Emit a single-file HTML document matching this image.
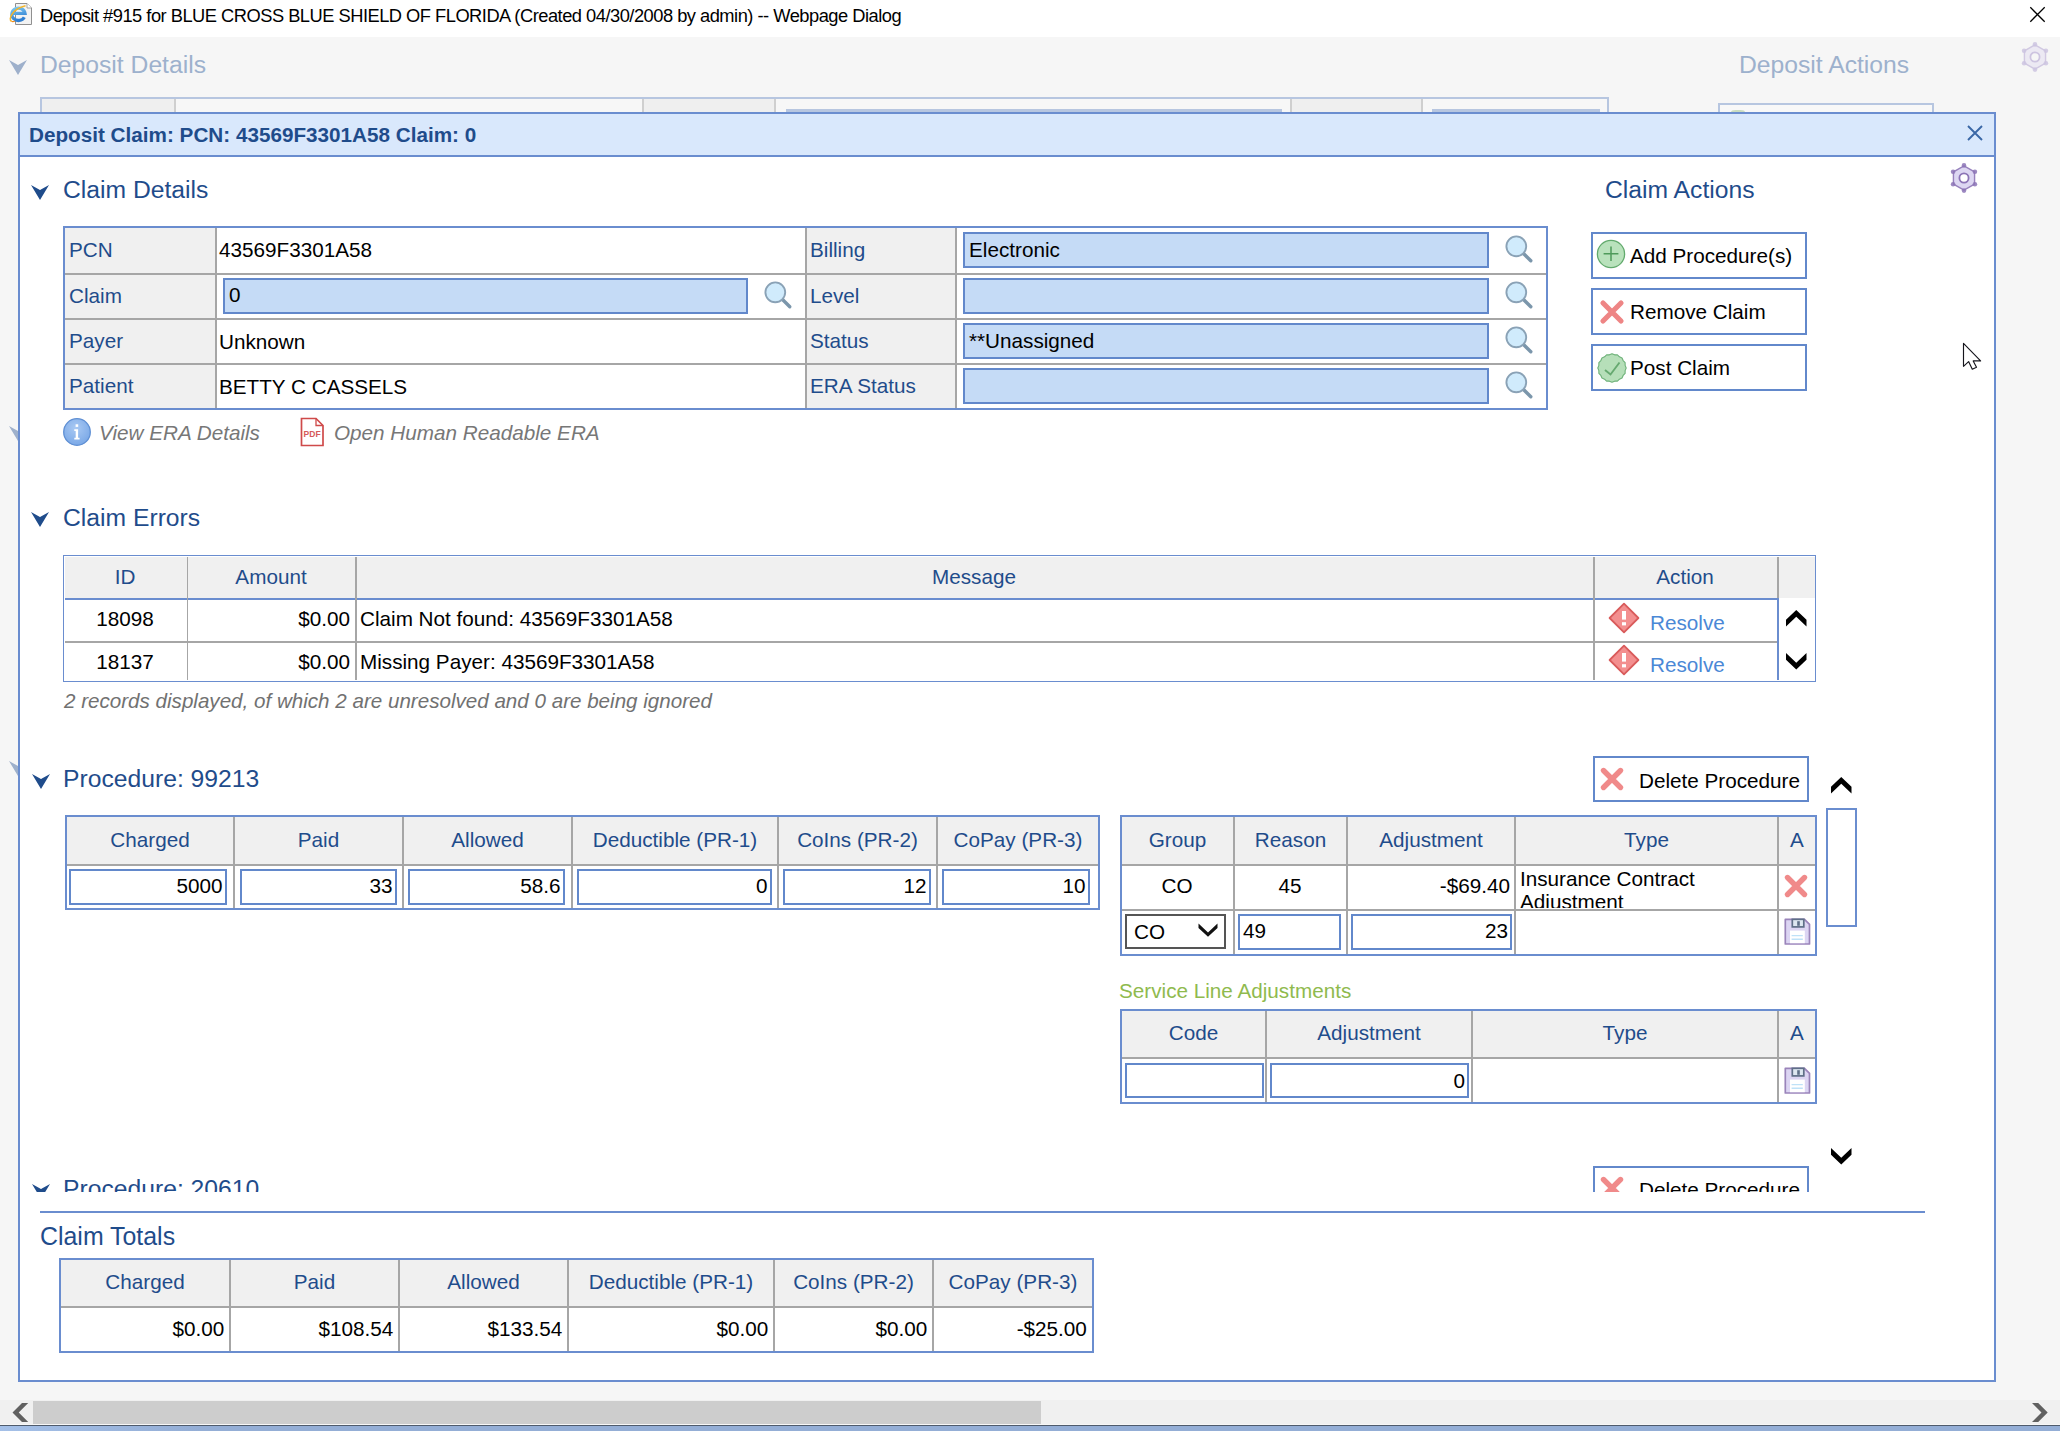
<!DOCTYPE html>
<html><head><meta charset="utf-8"><style>
html,body{margin:0;padding:0;width:2060px;height:1431px;overflow:hidden;background:#f6f6f6;}
body{position:relative;font-family:"Liberation Sans",sans-serif;}
body div{position:absolute;}
.t{white-space:pre;line-height:0;}
svg{position:absolute;overflow:visible;}
</style></head><body>
<div style="left:0px;top:0px;width:2060px;height:37px;background:#ffffff"></div>
<div class="t" style="left:40px;top:15.66px;font-size:18.3px;color:#000;letter-spacing:-0.5px">Deposit #915 for BLUE CROSS BLUE SHIELD OF FLORIDA (Created 04/30/2008 by admin) -- Webpage Dialog</div>
<svg style="left:0px;top:0px" width="40" height="30" viewBox="0 0 40 30">
<defs><linearGradient id="eg" x1="0" y1="0" x2="0.3" y2="1"><stop offset="0" stop-color="#7cc8f2"/><stop offset="1" stop-color="#2f7fd2"/></linearGradient></defs>
<path d="M15.5 3.5 H27 L31.5 8 V24.5 H15.5 Z" fill="#f3f3f3" stroke="#909090" stroke-width="1"/>
<path d="M27 3.5 V8 H31.5" fill="#fff" stroke="#909090" stroke-width="0.8"/>
<path d="M24.3 17.2 A6.6 6.2 0 1 1 25 13.4 H12.6" fill="none" stroke="url(#eg)" stroke-width="3.3"/>
<path d="M11.5 21.3 C8 19.5 12 9 25.5 5.8" fill="none" stroke="#f6b526" stroke-width="1.5"/>
<path d="M11.5 21.3 Q13 22 15 21" fill="none" stroke="#f08a1c" stroke-width="1.2"/>
</svg>
<svg style="left:2029px;top:6px" width="17" height="17" viewBox="0 0 17 17"><path d="M1.3 1.3 L15.7 15.7 M15.7 1.3 L1.3 15.7" stroke="#000" stroke-width="1.25"/></svg>
<div class="t" style="left:40px;top:65.44px;font-size:24.7px;color:#9db1cd;">Deposit Details</div>
<svg style="left:9px;top:60px" width="18" height="16" viewBox="0 0 18 16"><path d="M0 0 L9 5 L18 0 L9 15 Z" fill="#9eb0cb"/></svg>
<svg style="left:9px;top:426px" width="18" height="16" viewBox="0 0 18 16"><path d="M0 0 L9 5 L18 0 L9 15 Z" fill="#9eb0cb"/></svg>
<svg style="left:9px;top:761px" width="18" height="16" viewBox="0 0 18 16"><path d="M0 0 L9 5 L18 0 L9 15 Z" fill="#9eb0cb"/></svg>
<div class="t" style="left:1739px;top:65.44px;font-size:24.7px;color:#9db1cd;">Deposit Actions</div>
<div style="left:40px;top:97px;width:1569px;height:20px;box-sizing:border-box;border:2px solid #b7c6e0;background:#f7f7f7"></div>
<div style="left:42px;top:99px;width:132px;height:18px;background:#efefef"></div>
<div style="left:174px;top:99px;width:2px;height:18px;background:#cfcfcf"></div>
<div style="left:643px;top:99px;width:131px;height:18px;background:#efefef"></div>
<div style="left:642px;top:99px;width:2px;height:18px;background:#cfcfcf"></div>
<div style="left:774px;top:99px;width:2px;height:18px;background:#cfcfcf"></div>
<div style="left:1291px;top:99px;width:130px;height:18px;background:#efefef"></div>
<div style="left:1290px;top:99px;width:2px;height:18px;background:#cfcfcf"></div>
<div style="left:1421px;top:99px;width:2px;height:18px;background:#cfcfcf"></div>
<div style="left:786px;top:109px;width:496px;height:3px;background:#b7c6e0"></div>
<div style="left:1432px;top:109px;width:168px;height:3px;background:#b7c6e0"></div>
<div style="left:1718px;top:103px;width:216px;height:20px;box-sizing:border-box;border:2px solid #b7c6e0;background:#f8f8f8"></div>
<div style="left:1731px;top:110px;width:14px;height:4px;border-radius:7px/3px;background:#c9dcc0"></div>
<div style="left:18px;top:112px;width:1978px;height:1270px;box-sizing:border-box;border:2px solid #6a8dcf;background:#ffffff;"></div>
<div style="left:20px;top:114px;width:1974px;height:41px;background:#d9e8fc"></div>
<div style="left:20px;top:155px;width:1974px;height:2px;background:#6a8dcf"></div>
<div class="t" style="left:29px;top:134.83px;font-size:20.7px;color:#1f4c8b;font-weight:bold">Deposit Claim: PCN: 43569F3301A58 Claim: 0</div>
<svg style="left:1967px;top:125px" width="16" height="16" viewBox="0 0 16 16"><path d="M1 1 L15 15 M15 1 L1 15" stroke="#3a67a6" stroke-width="1.9"/></svg>
<svg style="left:2020px;top:42px;opacity:1" width="30" height="30" viewBox="0 0 30 30"><polygon points="15.00,2.80 25.57,8.90 25.57,21.10 15.00,27.20 4.43,21.10 4.43,8.90" fill="#ebe8f3" stroke="#cdc4e0" stroke-width="1.4" stroke-linejoin="round" opacity="0.9"/><circle cx="15.00" cy="2.40" r="2.3" fill="#cdc4e0" opacity="0.85"/><circle cx="25.91" cy="8.70" r="2.3" fill="#cdc4e0" opacity="0.85"/><circle cx="25.91" cy="21.30" r="2.3" fill="#cdc4e0" opacity="0.85"/><circle cx="15.00" cy="27.60" r="2.3" fill="#cdc4e0" opacity="0.85"/><circle cx="4.09" cy="21.30" r="2.3" fill="#cdc4e0" opacity="0.85"/><circle cx="4.09" cy="8.70" r="2.3" fill="#cdc4e0" opacity="0.85"/><circle cx="15" cy="15" r="4.6" fill="#f6f6f6" stroke="#cdc4e0" stroke-width="1.8"/></svg>
<svg style="left:31px;top:185px" width="18" height="16" viewBox="0 0 18 16"><path d="M0 0 L9 5 L18 0 L9 15 Z" fill="#1f4c8b"/></svg>
<div class="t" style="left:63px;top:190.44px;font-size:24.7px;color:#1f4c8b;">Claim Details</div>
<svg style="left:1949px;top:163px;opacity:1" width="30" height="30" viewBox="0 0 30 30"><polygon points="15.00,2.80 25.57,8.90 25.57,21.10 15.00,27.20 4.43,21.10 4.43,8.90" fill="#dad3f1" stroke="#8c74b6" stroke-width="1.4" stroke-linejoin="round" opacity="0.9"/><circle cx="15.00" cy="2.40" r="2.3" fill="#8c74b6" opacity="0.85"/><circle cx="25.91" cy="8.70" r="2.3" fill="#8c74b6" opacity="0.85"/><circle cx="25.91" cy="21.30" r="2.3" fill="#8c74b6" opacity="0.85"/><circle cx="15.00" cy="27.60" r="2.3" fill="#8c74b6" opacity="0.85"/><circle cx="4.09" cy="21.30" r="2.3" fill="#8c74b6" opacity="0.85"/><circle cx="4.09" cy="8.70" r="2.3" fill="#8c74b6" opacity="0.85"/><circle cx="15" cy="15" r="4.6" fill="#ffffff" stroke="#8c74b6" stroke-width="1.8"/></svg>
<div class="t" style="left:1605px;top:190.44px;font-size:24.7px;color:#1f4c8b;">Claim Actions</div>
<div style="left:63px;top:226px;width:1485px;height:184px;box-sizing:border-box;border:2px solid #6a8dcf;background:#fff;"></div>
<div style="left:65px;top:228px;width:150px;height:180px;background:#f0f0f0"></div>
<div style="left:807px;top:228px;width:148px;height:180px;background:#f0f0f0"></div>
<div style="left:215px;top:228px;width:2px;height:180px;background:#a6a6a6"></div>
<div style="left:805px;top:228px;width:2px;height:180px;background:#a6a6a6"></div>
<div style="left:955px;top:228px;width:2px;height:180px;background:#a6a6a6"></div>
<div style="left:65px;top:273px;width:1481px;height:2px;background:#a6a6a6"></div>
<div style="left:65px;top:318px;width:1481px;height:2px;background:#a6a6a6"></div>
<div style="left:65px;top:363px;width:1481px;height:2px;background:#a6a6a6"></div>
<div class="t" style="left:69px;top:249.83px;font-size:20.7px;color:#1f4c8b;">PCN</div>
<div class="t" style="left:69px;top:295.83px;font-size:20.7px;color:#1f4c8b;">Claim</div>
<div class="t" style="left:69px;top:340.83px;font-size:20.7px;color:#1f4c8b;">Payer</div>
<div class="t" style="left:69px;top:385.83px;font-size:20.7px;color:#1f4c8b;">Patient</div>
<div class="t" style="left:810px;top:249.83px;font-size:20.7px;color:#1f4c8b;">Billing</div>
<div class="t" style="left:810px;top:295.83px;font-size:20.7px;color:#1f4c8b;">Level</div>
<div class="t" style="left:810px;top:340.83px;font-size:20.7px;color:#1f4c8b;">Status</div>
<div class="t" style="left:810px;top:385.83px;font-size:20.7px;color:#1f4c8b;">ERA Status</div>
<div class="t" style="left:219px;top:249.83px;font-size:20.7px;color:#000;">43569F3301A58</div>
<div class="t" style="left:219px;top:341.83px;font-size:20.7px;color:#000;">Unknown</div>
<div class="t" style="left:219px;top:386.83px;font-size:20.7px;color:#000;">BETTY C CASSELS</div>
<div style="left:223px;top:278px;width:525px;height:36px;box-sizing:border-box;border:2px solid #6288cb;background:#c5dbf6;"></div>
<div class="t" style="left:229px;top:294.83px;font-size:20.7px;color:#000;">0</div>
<svg style="left:763px;top:281px" width="30" height="30" viewBox="0 0 30 30"><line x1="19" y1="18" x2="26.8" y2="25.8" stroke="#7b96ab" stroke-width="3.4" stroke-linecap="round"/><circle cx="12.3" cy="11.3" r="9.9" fill="#d0ebfc" stroke="#8aa2b6" stroke-width="1.9"/></svg>
<div style="left:963px;top:232px;width:526px;height:36px;box-sizing:border-box;border:2px solid #6288cb;background:#c5dbf6;"></div>
<div class="t" style="left:969px;top:249.83px;font-size:20.7px;color:#000;">Electronic</div>
<svg style="left:1504px;top:235px" width="30" height="30" viewBox="0 0 30 30"><line x1="19" y1="18" x2="26.8" y2="25.8" stroke="#7b96ab" stroke-width="3.4" stroke-linecap="round"/><circle cx="12.3" cy="11.3" r="9.9" fill="#d0ebfc" stroke="#8aa2b6" stroke-width="1.9"/></svg>
<div style="left:963px;top:278px;width:526px;height:36px;box-sizing:border-box;border:2px solid #6288cb;background:#c5dbf6;"></div>
<svg style="left:1504px;top:281px" width="30" height="30" viewBox="0 0 30 30"><line x1="19" y1="18" x2="26.8" y2="25.8" stroke="#7b96ab" stroke-width="3.4" stroke-linecap="round"/><circle cx="12.3" cy="11.3" r="9.9" fill="#d0ebfc" stroke="#8aa2b6" stroke-width="1.9"/></svg>
<div style="left:963px;top:323px;width:526px;height:36px;box-sizing:border-box;border:2px solid #6288cb;background:#c5dbf6;"></div>
<div class="t" style="left:969px;top:340.83px;font-size:20.7px;color:#000;">**Unassigned</div>
<svg style="left:1504px;top:326px" width="30" height="30" viewBox="0 0 30 30"><line x1="19" y1="18" x2="26.8" y2="25.8" stroke="#7b96ab" stroke-width="3.4" stroke-linecap="round"/><circle cx="12.3" cy="11.3" r="9.9" fill="#d0ebfc" stroke="#8aa2b6" stroke-width="1.9"/></svg>
<div style="left:963px;top:368px;width:526px;height:36px;box-sizing:border-box;border:2px solid #6288cb;background:#c5dbf6;"></div>
<svg style="left:1504px;top:371px" width="30" height="30" viewBox="0 0 30 30"><line x1="19" y1="18" x2="26.8" y2="25.8" stroke="#7b96ab" stroke-width="3.4" stroke-linecap="round"/><circle cx="12.3" cy="11.3" r="9.9" fill="#d0ebfc" stroke="#8aa2b6" stroke-width="1.9"/></svg>
<div style="left:1591px;top:232px;width:216px;height:47px;box-sizing:border-box;border:2px solid #6288cb;background:#fff;"></div>
<div class="t" style="left:1630px;top:255.83px;font-size:20.7px;color:#000;">Add Procedure(s)</div>
<div style="left:1591px;top:288px;width:216px;height:47px;box-sizing:border-box;border:2px solid #6288cb;background:#fff;"></div>
<div class="t" style="left:1630px;top:311.83px;font-size:20.7px;color:#000;">Remove Claim</div>
<div style="left:1591px;top:344px;width:216px;height:47px;box-sizing:border-box;border:2px solid #6288cb;background:#fff;"></div>
<div class="t" style="left:1630px;top:367.83px;font-size:20.7px;color:#000;">Post Claim</div>
<svg style="left:1596px;top:239px" width="30" height="30" viewBox="0 0 30 30"><circle cx="15" cy="15" r="13.6" fill="#b9e2bc" stroke="#62aa6d" stroke-width="1.3"/><path d="M15 7.6 V22 M7.6 14.8 H22.4" stroke="#4e9a5a" stroke-width="1.5"/></svg>
<svg style="left:1598px;top:298px" width="28" height="28" viewBox="0 0 28 28"><path d="M5 5 L23 23 M23 5 L5 23" stroke="#ee8585" stroke-width="5.2" stroke-linecap="round"/></svg>
<svg style="left:1597px;top:353px" width="30" height="30" viewBox="0 0 30 30"><polygon points="29.20,15.00 28.14,17.61 28.12,20.43 26.14,22.44 25.04,25.04 22.44,26.14 20.43,28.12 17.61,28.14 15.00,29.20 12.39,28.14 9.57,28.12 7.56,26.14 4.96,25.04 3.86,22.44 1.88,20.43 1.86,17.61 0.80,15.00 1.86,12.39 1.88,9.57 3.86,7.56 4.96,4.96 7.56,3.86 9.57,1.88 12.39,1.86 15.00,0.80 17.61,1.86 20.43,1.88 22.44,3.86 25.04,4.96 26.14,7.56 28.12,9.57 28.14,12.39" fill="#b6dfb9" stroke="#6db178" stroke-width="1.1" stroke-linejoin="round"/><path d="M8 17 L13.5 21.5 L22.5 9.5" stroke="#66a970" stroke-width="1.9" fill="none"/></svg>
<svg style="left:1960px;top:340px" width="26" height="34" viewBox="0 0 26 34"><path d="M3.5 3.3 V26.3 L8.6 21.6 L12.3 29.2 L16.5 27.3 L13.2 20.9 H20.6 Z" fill="#fff" stroke="#15151c" stroke-width="1.15" stroke-linejoin="round"/></svg>
<svg style="left:62px;top:417px" width="30" height="30" viewBox="0 0 30 30"><defs><radialGradient id="ig" cx="0.45" cy="0.35" r="0.7"><stop offset="0" stop-color="#a9c9f3"/><stop offset="1" stop-color="#77a6e6"/></radialGradient></defs><circle cx="15" cy="15" r="13.3" fill="url(#ig)" stroke="#5f8fd3" stroke-width="1.3"/><rect x="13.6" y="7.3" width="2.6" height="2.6" fill="#fff"/><path d="M12.3 12.3 H16.1 V20.8 H17.6 V22.6 H12.3 V20.8 H13.7 V14.1 H12.3 Z" fill="#fff"/></svg>
<div class="t" style="left:99px;top:432.83px;font-size:20.7px;color:#777777;font-style:italic">View ERA Details</div>
<svg style="left:299px;top:416px" width="26" height="32" viewBox="0 0 26 32"><path d="M2.5 2.5 H17 L24 9.5 V29.5 H2.5 Z" fill="#fff" stroke="#cf4a4a" stroke-width="1.7"/><path d="M17 2.5 V9.5 H24" fill="none" stroke="#cf4a4a" stroke-width="1.3"/><text x="4.6" y="20.5" font-size="8.6" font-family="Liberation Sans" font-weight="bold" fill="#d65a5a" textLength="17" lengthAdjust="spacingAndGlyphs">PDF</text></svg>
<div class="t" style="left:334px;top:432.83px;font-size:20.7px;color:#777777;font-style:italic">Open Human Readable ERA</div>
<svg style="left:31px;top:512px" width="18" height="16" viewBox="0 0 18 16"><path d="M0 0 L9 5 L18 0 L9 15 Z" fill="#1f4c8b"/></svg>
<div class="t" style="left:63px;top:518.44px;font-size:24.7px;color:#1f4c8b;">Claim Errors</div>
<div style="left:63px;top:555px;width:1753px;height:126.5px;box-sizing:border-box;border:1.5px solid #6a8dcf;background:#fff;"></div>
<div style="left:64.5px;top:556.5px;width:1750px;height:41.5px;background:#f0f0f0"></div>
<div style="left:65px;top:598px;width:1714px;height:2px;background:#6a8dcf"></div>
<div style="left:186.5px;top:556.5px;width:1.5px;height:123.5px;background:#a6a6a6"></div>
<div style="left:355px;top:556.5px;width:1.5px;height:123.5px;background:#a6a6a6"></div>
<div style="left:1593px;top:556.5px;width:1.5px;height:123.5px;background:#a6a6a6"></div>
<div style="left:1777px;top:557px;width:2px;height:41px;background:#a6a6a6"></div>
<div style="left:1777px;top:600px;width:1.5px;height:80px;background:#6a8dcf"></div>
<div style="left:65px;top:641px;width:1712px;height:2px;background:#a6a6a6"></div>
<div class="t" style="left:-475px;width:1200px;text-align:center;top:576.83px;font-size:20.7px;color:#1f4c8b;">ID</div>
<div class="t" style="left:-329px;width:1200px;text-align:center;top:576.83px;font-size:20.7px;color:#1f4c8b;">Amount</div>
<div class="t" style="left:374px;width:1200px;text-align:center;top:576.83px;font-size:20.7px;color:#1f4c8b;">Message</div>
<div class="t" style="left:1085px;width:1200px;text-align:center;top:576.83px;font-size:20.7px;color:#1f4c8b;">Action</div>
<div class="t" style="left:-475px;width:1200px;text-align:center;top:618.83px;font-size:20.7px;color:#000;">18098</div>
<div class="t" style="right:1710px;top:618.83px;font-size:20.7px;color:#000;">$0.00</div>
<div class="t" style="left:360px;top:618.83px;font-size:20.7px;color:#000;">Claim Not found: 43569F3301A58</div>
<svg style="left:1608px;top:602px" width="32" height="32" viewBox="0 0 32 32"><path d="M16 1.6 L30.4 16 L16 30.4 L1.6 16 Z" fill="#f38f8f" stroke="#d95b5b" stroke-width="1.8" stroke-linejoin="round"/><rect x="14" y="9" width="4" height="8.6" fill="#fff"/><rect x="14" y="20.2" width="4" height="3.2" fill="#fff"/></svg>
<div class="t" style="left:1650px;top:622.83px;font-size:20.7px;color:#4b88d6;">Resolve</div>
<div class="t" style="left:-475px;width:1200px;text-align:center;top:661.83px;font-size:20.7px;color:#000;">18137</div>
<div class="t" style="right:1710px;top:661.83px;font-size:20.7px;color:#000;">$0.00</div>
<div class="t" style="left:360px;top:661.83px;font-size:20.7px;color:#000;">Missing Payer: 43569F3301A58</div>
<svg style="left:1608px;top:644px" width="32" height="32" viewBox="0 0 32 32"><path d="M16 1.6 L30.4 16 L16 30.4 L1.6 16 Z" fill="#f38f8f" stroke="#d95b5b" stroke-width="1.8" stroke-linejoin="round"/><rect x="14" y="9" width="4" height="8.6" fill="#fff"/><rect x="14" y="20.2" width="4" height="3.2" fill="#fff"/></svg>
<div class="t" style="left:1650px;top:664.83px;font-size:20.7px;color:#4b88d6;">Resolve</div>
<svg style="left:1785.7px;top:610.2px" width="22" height="18" viewBox="0 0 22 18"><path d="M0 9.8 L10.25 0 L20.5 9.8 L20.5 16.6 L10.25 6.8 L0 16.6 Z" fill="#000"/></svg>
<svg style="left:1785.7px;top:652.6px" width="22" height="18" viewBox="0 0 22 18"><path d="M0 0 L10.25 9.8 L20.5 0 L20.5 6.8 L10.25 16.6 L0 6.8 Z" fill="#000"/></svg>
<div class="t" style="left:64px;top:700.86px;font-size:20.6px;color:#717171;font-style:italic">2 records displayed, of which 2 are unresolved and 0 are being ignored</div>
<svg style="left:32px;top:774px" width="18" height="16" viewBox="0 0 18 16"><path d="M0 0 L9 5 L18 0 L9 15 Z" fill="#1f4c8b"/></svg>
<div class="t" style="left:63px;top:779.44px;font-size:24.7px;color:#1f4c8b;">Procedure: 99213</div>
<div style="left:1593px;top:756px;width:216px;height:46px;box-sizing:border-box;border:2px solid #6288cb;background:#fff;"></div>
<svg style="left:1599px;top:766px" width="26" height="26" viewBox="0 0 26 26"><path d="M4.5 4.5 L21.5 21.5 M21.5 4.5 L4.5 21.5" stroke="#f08a8a" stroke-width="5.4" stroke-linecap="round"/></svg>
<div class="t" style="left:1639px;top:780.83px;font-size:20.7px;color:#000;">Delete Procedure</div>
<svg style="left:1830.5px;top:777px" width="22" height="18" viewBox="0 0 22 18"><path d="M0 9.8 L10.25 0 L20.5 9.8 L20.5 16.6 L10.25 6.8 L0 16.6 Z" fill="#000"/></svg>
<div style="left:65px;top:815px;width:1035px;height:95px;box-sizing:border-box;border:2px solid #6a8dcf;background:#fff;"></div>
<div style="left:67px;top:817px;width:1031px;height:47px;background:#f0f0f0"></div>
<div style="left:67px;top:864px;width:1031px;height:2px;background:#a6a6a6"></div>
<div style="left:233px;top:817px;width:2px;height:91px;background:#a6a6a6"></div>
<div style="left:402px;top:817px;width:2px;height:91px;background:#a6a6a6"></div>
<div style="left:571px;top:817px;width:2px;height:91px;background:#a6a6a6"></div>
<div style="left:777px;top:817px;width:2px;height:91px;background:#a6a6a6"></div>
<div style="left:936px;top:817px;width:2px;height:91px;background:#a6a6a6"></div>
<div class="t" style="left:-450.0px;width:1200px;text-align:center;top:839.83px;font-size:20.7px;color:#1f4c8b;">Charged</div>
<div style="left:69px;top:869px;width:158px;height:36px;box-sizing:border-box;border:2px solid #6288cb;background:#fff;"></div>
<div class="t" style="right:1837.5px;top:885.83px;font-size:20.7px;color:#000;">5000</div>
<div class="t" style="left:-281.5px;width:1200px;text-align:center;top:839.83px;font-size:20.7px;color:#1f4c8b;">Paid</div>
<div style="left:240px;top:869px;width:157px;height:36px;box-sizing:border-box;border:2px solid #6288cb;background:#fff;"></div>
<div class="t" style="right:1667.5px;top:885.83px;font-size:20.7px;color:#000;">33</div>
<div class="t" style="left:-112.5px;width:1200px;text-align:center;top:839.83px;font-size:20.7px;color:#1f4c8b;">Allowed</div>
<div style="left:408px;top:869px;width:157px;height:36px;box-sizing:border-box;border:2px solid #6288cb;background:#fff;"></div>
<div class="t" style="right:1499.5px;top:885.83px;font-size:20.7px;color:#000;">58.6</div>
<div class="t" style="left:75.0px;width:1200px;text-align:center;top:839.83px;font-size:20.7px;color:#1f4c8b;">Deductible (PR-1)</div>
<div style="left:577px;top:869px;width:195px;height:36px;box-sizing:border-box;border:2px solid #6288cb;background:#fff;"></div>
<div class="t" style="right:1292.5px;top:885.83px;font-size:20.7px;color:#000;">0</div>
<div class="t" style="left:257.5px;width:1200px;text-align:center;top:839.83px;font-size:20.7px;color:#1f4c8b;">CoIns (PR-2)</div>
<div style="left:783px;top:869px;width:148px;height:36px;box-sizing:border-box;border:2px solid #6288cb;background:#fff;"></div>
<div class="t" style="right:1133.5px;top:885.83px;font-size:20.7px;color:#000;">12</div>
<div class="t" style="left:418.0px;width:1200px;text-align:center;top:839.83px;font-size:20.7px;color:#1f4c8b;">CoPay (PR-3)</div>
<div style="left:942px;top:869px;width:148px;height:36px;box-sizing:border-box;border:2px solid #6288cb;background:#fff;"></div>
<div class="t" style="right:974.5px;top:885.83px;font-size:20.7px;color:#000;">10</div>
<div style="left:1120px;top:815px;width:697px;height:141px;box-sizing:border-box;border:2px solid #6a8dcf;background:#fff;"></div>
<div style="left:1122px;top:817px;width:693px;height:47px;background:#f0f0f0"></div>
<div style="left:1122px;top:864px;width:693px;height:2px;background:#a6a6a6"></div>
<div style="left:1122px;top:909px;width:693px;height:2px;background:#a6a6a6"></div>
<div style="left:1233px;top:817px;width:2px;height:137px;background:#a6a6a6"></div>
<div style="left:1346px;top:817px;width:2px;height:137px;background:#a6a6a6"></div>
<div style="left:1514px;top:817px;width:2px;height:137px;background:#a6a6a6"></div>
<div style="left:1777px;top:817px;width:2px;height:137px;background:#a6a6a6"></div>
<div class="t" style="left:577.5px;width:1200px;text-align:center;top:839.83px;font-size:20.7px;color:#1f4c8b;">Group</div>
<div class="t" style="left:690.5px;width:1200px;text-align:center;top:839.83px;font-size:20.7px;color:#1f4c8b;">Reason</div>
<div class="t" style="left:831.0px;width:1200px;text-align:center;top:839.83px;font-size:20.7px;color:#1f4c8b;">Adjustment</div>
<div class="t" style="left:1046.5px;width:1200px;text-align:center;top:839.83px;font-size:20.7px;color:#1f4c8b;">Type</div>
<div class="t" style="left:1197.0px;width:1200px;text-align:center;top:839.83px;font-size:20.7px;color:#1f4c8b;">A</div>
<div class="t" style="left:577px;width:1200px;text-align:center;top:885.83px;font-size:20.7px;color:#000;">CO</div>
<div class="t" style="left:690px;width:1200px;text-align:center;top:885.83px;font-size:20.7px;color:#000;">45</div>
<div class="t" style="right:550px;top:885.83px;font-size:20.7px;color:#000;">-$69.40</div>
<div style="left:1516px;top:865px;width:261px;height:43px;overflow:hidden"><div class="t" style="left:4px;font-size:20.7px;position:absolute;white-space:normal;width:250px;line-height:23px;top:2.3px">Insurance Contract Adjustment</div></div>
<svg style="left:1783px;top:873px" width="26" height="26" viewBox="0 0 26 26"><path d="M4.5 4.5 L21.5 21.5 M21.5 4.5 L4.5 21.5" stroke="#f08a8a" stroke-width="5.4" stroke-linecap="round"/></svg>
<div style="left:1125px;top:914px;width:101px;height:35px;box-sizing:border-box;border:2px solid #555;background:#fff;"></div>
<div class="t" style="left:1134px;top:931.83px;font-size:20.7px;color:#000;">CO</div>
<svg style="left:1197px;top:922px" width="23" height="16" viewBox="0 0 23 16"><path d="M1.5 1.5 L11 10.5 L20.5 1.5 L20.5 6 L11 14.8 L1.5 6 Z" fill="#111"/></svg>
<div style="left:1238px;top:914px;width:103px;height:36px;box-sizing:border-box;border:2px solid #6288cb;background:#fff;"></div>
<div class="t" style="left:1243px;top:930.83px;font-size:20.7px;color:#000;">49</div>
<div style="left:1351px;top:914px;width:161px;height:36px;box-sizing:border-box;border:2px solid #6288cb;background:#fff;"></div>
<div class="t" style="right:552px;top:930.83px;font-size:20.7px;color:#000;">23</div>
<svg style="left:1784px;top:918px" width="28" height="28" viewBox="0 0 28 28"><path d="M1.3 1.3 H20.5 L25.5 6.3 V26 H1.3 Z" fill="#dcd5f3" stroke="#9a84ba" stroke-width="1.7" stroke-linejoin="round"/><rect x="8.3" y="1.3" width="11.5" height="7.6" fill="#dde7f1" stroke="#5f6f88" stroke-width="1.7"/><rect x="13.2" y="3.2" width="2.6" height="4.6" fill="#5f6f88"/><rect x="6" y="12.6" width="14.8" height="12.6" fill="#ffffff"/><path d="M7.6 17.6 H18.8 M7.6 21.3 H18.8" stroke="#bfe2f8" stroke-width="1.4"/></svg>
<div style="left:1826px;top:808px;width:31px;height:119px;box-sizing:border-box;border:2px solid #6a8dcf;background:#fff;"></div>
<div class="t" style="left:1119px;top:990.83px;font-size:20.7px;color:#8fba4e;">Service Line Adjustments</div>
<div style="left:1120px;top:1009px;width:697px;height:95px;box-sizing:border-box;border:2px solid #6a8dcf;background:#fff;"></div>
<div style="left:1122px;top:1011px;width:693px;height:46px;background:#f0f0f0"></div>
<div style="left:1122px;top:1057px;width:693px;height:2px;background:#a6a6a6"></div>
<div style="left:1265px;top:1011px;width:2px;height:91px;background:#a6a6a6"></div>
<div style="left:1471px;top:1011px;width:2px;height:91px;background:#a6a6a6"></div>
<div style="left:1777px;top:1011px;width:2px;height:91px;background:#a6a6a6"></div>
<div class="t" style="left:593.5px;width:1200px;text-align:center;top:1032.83px;font-size:20.7px;color:#1f4c8b;">Code</div>
<div class="t" style="left:769.0px;width:1200px;text-align:center;top:1032.83px;font-size:20.7px;color:#1f4c8b;">Adjustment</div>
<div class="t" style="left:1025.0px;width:1200px;text-align:center;top:1032.83px;font-size:20.7px;color:#1f4c8b;">Type</div>
<div class="t" style="left:1197.0px;width:1200px;text-align:center;top:1032.83px;font-size:20.7px;color:#1f4c8b;">A</div>
<div style="left:1125px;top:1063px;width:139px;height:35px;box-sizing:border-box;border:2px solid #6288cb;background:#fff;"></div>
<div style="left:1270px;top:1063px;width:199px;height:35px;box-sizing:border-box;border:2px solid #6288cb;background:#fff;"></div>
<div class="t" style="right:595px;top:1080.83px;font-size:20.7px;color:#000;">0</div>
<svg style="left:1784px;top:1067px" width="28" height="28" viewBox="0 0 28 28"><path d="M1.3 1.3 H20.5 L25.5 6.3 V26 H1.3 Z" fill="#dcd5f3" stroke="#9a84ba" stroke-width="1.7" stroke-linejoin="round"/><rect x="8.3" y="1.3" width="11.5" height="7.6" fill="#dde7f1" stroke="#5f6f88" stroke-width="1.7"/><rect x="13.2" y="3.2" width="2.6" height="4.6" fill="#5f6f88"/><rect x="6" y="12.6" width="14.8" height="12.6" fill="#ffffff"/><path d="M7.6 17.6 H18.8 M7.6 21.3 H18.8" stroke="#bfe2f8" stroke-width="1.4"/></svg>
<svg style="left:1830.7px;top:1147.5px" width="22" height="18" viewBox="0 0 22 18"><path d="M0 0 L10.25 9.8 L20.5 0 L20.5 6.8 L10.25 16.6 L0 6.8 Z" fill="#000"/></svg>
<div style="left:20px;top:1160px;width:1974px;height:32px;overflow:hidden">
<svg style="left:12px;top:24px" width="18" height="16" viewBox="0 0 18 16"><path d="M0 0 L9 5 L18 0 L9 15 Z" fill="#1f4c8b"/></svg>
<div class="t" style="left:43px;top:28.94px;font-size:24.7px;color:#1f4c8b">Procedure: 20610</div>
<div style="left:1573px;top:6px;width:216px;height:46px;box-sizing:border-box;border:2px solid #6288cb;background:#fff"></div>
<svg style="left:1579px;top:15px" width="26" height="26" viewBox="0 0 26 26"><path d="M4.5 4.5 L21.5 21.5 M21.5 4.5 L4.5 21.5" stroke="#f08a8a" stroke-width="5.4" stroke-linecap="round"/></svg>
<div class="t" style="left:1619px;top:29.83px;font-size:20.7px;color:#000">Delete Procedure</div>
</div>
<div style="left:40px;top:1211px;width:1885px;height:1.6px;background:#6a8dcf"></div>
<div class="t" style="left:40px;top:1236.37px;font-size:24.9px;color:#1f4c8b;">Claim Totals</div>
<div style="left:59px;top:1258px;width:1035px;height:95px;box-sizing:border-box;border:2px solid #6a8dcf;background:#fff;"></div>
<div style="left:61px;top:1260px;width:1031px;height:46px;background:#f0f0f0"></div>
<div style="left:61px;top:1306px;width:1031px;height:2px;background:#a6a6a6"></div>
<div style="left:229px;top:1260px;width:2px;height:91px;background:#a6a6a6"></div>
<div style="left:398px;top:1260px;width:2px;height:91px;background:#a6a6a6"></div>
<div style="left:567px;top:1260px;width:2px;height:91px;background:#a6a6a6"></div>
<div style="left:773px;top:1260px;width:2px;height:91px;background:#a6a6a6"></div>
<div style="left:932px;top:1260px;width:2px;height:91px;background:#a6a6a6"></div>
<div class="t" style="left:-455.0px;width:1200px;text-align:center;top:1281.83px;font-size:20.7px;color:#1f4c8b;">Charged</div>
<div class="t" style="right:1835.7px;top:1328.83px;font-size:20.7px;color:#000;">$0.00</div>
<div class="t" style="left:-285.5px;width:1200px;text-align:center;top:1281.83px;font-size:20.7px;color:#1f4c8b;">Paid</div>
<div class="t" style="right:1666.7px;top:1328.83px;font-size:20.7px;color:#000;">$108.54</div>
<div class="t" style="left:-116.5px;width:1200px;text-align:center;top:1281.83px;font-size:20.7px;color:#1f4c8b;">Allowed</div>
<div class="t" style="right:1497.7px;top:1328.83px;font-size:20.7px;color:#000;">$133.54</div>
<div class="t" style="left:71.0px;width:1200px;text-align:center;top:1281.83px;font-size:20.7px;color:#1f4c8b;">Deductible (PR-1)</div>
<div class="t" style="right:1291.7px;top:1328.83px;font-size:20.7px;color:#000;">$0.00</div>
<div class="t" style="left:253.5px;width:1200px;text-align:center;top:1281.83px;font-size:20.7px;color:#1f4c8b;">CoIns (PR-2)</div>
<div class="t" style="right:1132.7px;top:1328.83px;font-size:20.7px;color:#000;">$0.00</div>
<div class="t" style="left:413.0px;width:1200px;text-align:center;top:1281.83px;font-size:20.7px;color:#1f4c8b;">CoPay (PR-3)</div>
<div class="t" style="right:973.2px;top:1328.83px;font-size:20.7px;color:#000;">-$25.00</div>
<div style="left:0px;top:1400px;width:2060px;height:24px;background:#f0f0f0"></div>
<div style="left:33px;top:1401px;width:1008px;height:23px;background:#cdcdcd"></div>
<svg style="left:0px;top:1395px" width="40" height="30" viewBox="0 0 40 30"><path d="M28.2 8 H22 L12.5 17.5 L22 27 H28.2 L18.7 17.5 Z" fill="#606060"/></svg>
<svg style="left:2020px;top:1395px" width="40" height="30" viewBox="0 0 40 30"><path d="M12 8 H18.2 L27.7 17.5 L18.2 27 H12 L21.5 17.5 Z" fill="#606060"/></svg>
<div style="left:0px;top:1424px;width:2060px;height:1px;background:#f7f7f7"></div>
<div style="left:0px;top:1425px;width:2060px;height:1px;background:#4f5b6c"></div>
<div style="left:0px;top:1426px;width:2060px;height:5px;background:linear-gradient(90deg,#a4c0e8 0px,#94aed6 200px,#94aed6 100%)"></div>
</body></html>
